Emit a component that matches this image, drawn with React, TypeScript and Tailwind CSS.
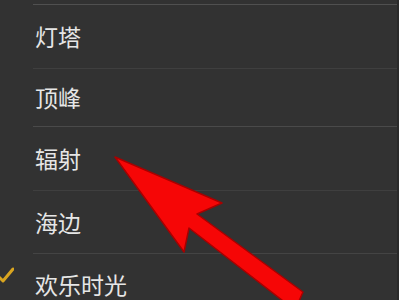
export default function App() {
  const rows = [
    { label: "灯塔", h: "h-[64px]" },
    { label: "顶峰", h: "h-[58px]" },
    { label: "辐射", h: "h-[64px]" },
    { label: "海边", h: "h-[63px]" },
  ];

  return (
    <div
      className="relative h-[300px] w-[399px] overflow-hidden bg-[#323232]"
      style={{ fontFamily: '"Noto Sans CJK SC", "Noto Sans", sans-serif' }}
    >
      <div className="flex flex-col pt-[4px]">
        {rows.map((r, i) => (
          <div
            key={r.label}
            className={`${r.h} ml-[33px] flex items-center border-t ${
              i === 2 ? "border-[#4a4a4a]" : i === 0 ? "border-[#505050]" : "border-[#3f3f3f]"
            }`}
          >
            <span className="pl-[2px] text-[23px] leading-none text-[#e6e6e6]">
              {r.label}
            </span>
          </div>
        ))}
        {/* last row, checked */}
        <div className="relative ml-[33px] flex h-[46px] items-start border-t border-[#444444] pt-[19px]">
          <svg
            className="absolute left-[-39px] top-[12px]"
            width="20"
            height="18"
            viewBox="0 0 20 18"
            aria-hidden
          >
            <path
              d="M3 9l6 6L19 3"
              fill="none"
              stroke="#d9a520"
              strokeWidth="3"
              strokeLinecap="round"
              strokeLinejoin="round"
            />
          </svg>
          <span className="pl-[2px] text-[23px] leading-none text-[#e6e6e6]">
            欢乐时光
          </span>
        </div>
      </div>

      <div className="absolute right-0 top-0 h-full w-[2px] bg-[#2a2a2a]" />

      {/* red arrow annotation */}
      <svg
        className="absolute left-0 top-0"
        width="399"
        height="300"
        viewBox="0 0 399 300"
        aria-hidden
      >
        <polygon
          points="115,157 222,203 197,214 303,292 299,301 287,304 189,228 184,252"
          fill="#f60606"
          stroke="#a80000"
          strokeWidth="1.5"
          strokeLinejoin="round"
        />
      </svg>
    </div>
  );
}
